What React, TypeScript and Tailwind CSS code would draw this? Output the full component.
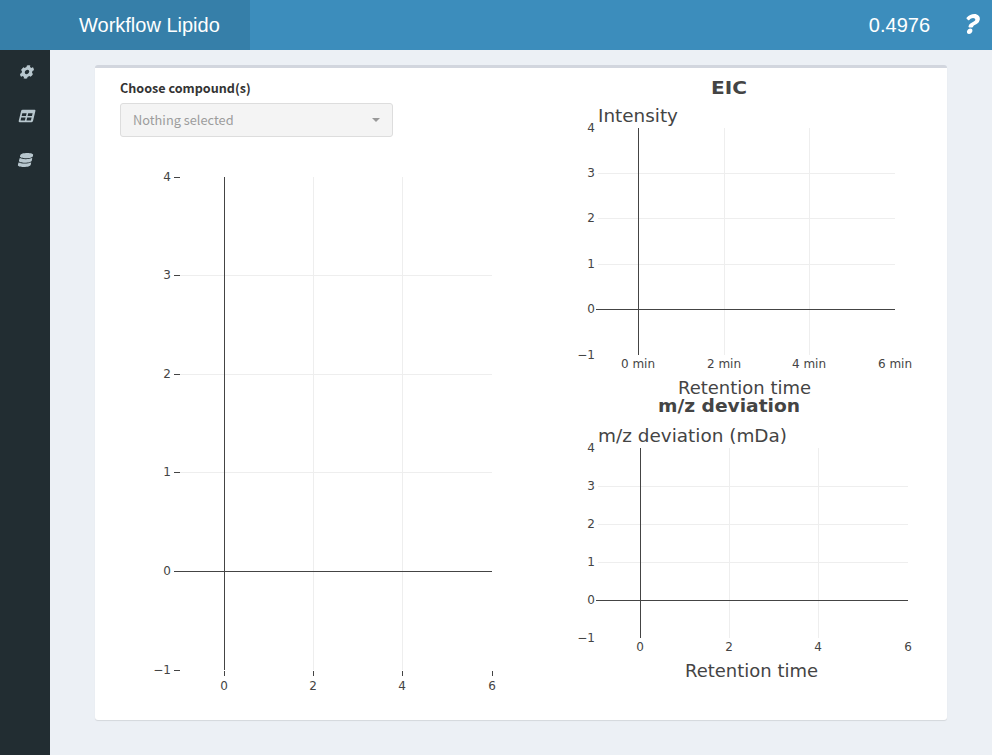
import { FaCog, FaDatabase, FaQuestion } from "react-icons/fa";

type Tick = { at: number; label: string };
type Label = { text: string; x: number; y: number; width: number; bold?: boolean };
type ChartProps = {
  width: number;
  height: number;
  left: number;
  right: number;
  top: number;
  bottom: number;
  xs: Tick[];
  ys: Tick[];
  xBase: number;
  labelRight: number;
  zeroStart: number;
  outerTicks?: boolean;
  labels?: Label[];
  className: string;
};

const GRID = "#eeeeee";
const INK = "#444444";

function Chart(p: ChartProps) {
  return (
    <svg
      width={p.width}
      height={p.height}
      className={`block overflow-visible font-['DejaVu_Sans',sans-serif] ${p.className}`}
      fill={INK}
      shapeRendering="crispEdges"
    >
      {p.xs.slice(1, 3).map((t) => (
        <rect key={t.at} x={t.at} y={p.top} width={1} height={p.bottom - p.top} fill={GRID} />
      ))}
      {p.ys.slice(1, 4).map((t) => (
        <rect key={t.at} x={p.left} y={t.at} width={p.right - p.left} height={1} fill={GRID} />
      ))}
      <rect x={p.xs[0].at} y={p.top} width={1} height={p.bottom - p.top} />
      <rect x={p.zeroStart} y={p.ys[4].at} width={p.right - p.zeroStart} height={1} />
      {p.outerTicks && p.xs.map((t) => <rect key={t.at} x={t.at} y={p.bottom + 1} width={1} height={5} />)}
      {p.outerTicks && p.ys.map((t) => <rect key={t.at} x={p.zeroStart} y={t.at} width={6} height={1} />)}
      {p.xs.map((t) => (
        <text key={t.at} x={t.at} y={p.xBase} textAnchor="middle" className="text-[12px]">
          {t.label}
        </text>
      ))}
      {p.ys.map((t) => (
        <text key={t.at} x={p.labelRight} y={t.at + 4} textAnchor="end" className="text-[12px]">
          {t.label}
        </text>
      ))}
      {p.labels?.map((l) => (
        <text
          key={l.text}
          x={l.x}
          y={l.y}
          textLength={l.width}
          lengthAdjust="spacingAndGlyphs"
          className={l.bold ? "text-[18px] font-bold" : "text-[18px]"}
        >
          {l.text}
        </text>
      ))}
    </svg>
  );
}

function TableIcon() {
  return (
    <svg width="18" height="14" viewBox="0 0 18 14" fill="currentColor" fillRule="evenodd" className="shrink-0">
      <path d="M4.6 .8H16.6Q17.7 .8 17.4 1.9L15 12.1Q14.7 13.2 13.6 13.2H1.5Q.4 13.2 .7 12.1L3.1 1.9Q3.4 .8 4.6 .8ZM4.3 4.2L3.7 6.9H8L8.6 4.2ZM10.2 4.2L9.6 6.9H14L14.6 4.2ZM3.2 8.6L2.6 11.5H6.9L7.6 8.6ZM9.2 8.6L8.5 11.5H12.9L13.6 8.6Z" />
    </svg>
  );
}

const ticks = (at: number[], labels: string[]): Tick[] => at.map((v, i) => ({ at: v, label: labels[i] }));
const Y = ["4", "3", "2", "1", "0", "−1"];

export default function App() {
  return (
    <div className="flex h-[755px] w-[992px] flex-col overflow-hidden bg-[#ecf0f5]">
      <header className="flex h-[50px] shrink-0 bg-[#3c8dbc] font-['Liberation_Sans',sans-serif] text-[20px] leading-[50px] text-white">
        <div className="w-[250px] bg-[#367fa9] pl-[79px]">Workflow Lipido</div>
        <div className="flex flex-1 items-center justify-end pr-[13px]">
          <span className="mr-[34px]">0.4976</span>
          <FaQuestion className="mb-[3px] h-[20px] w-[15px] -skew-x-[14deg]" preserveAspectRatio="none" />
        </div>
      </header>
      <div className="flex min-h-0 flex-1">
        <aside className="flex w-[50px] shrink-0 flex-col items-center gap-[30px] bg-[#222d32] pt-[15px] pl-[3px] text-[#b8c7ce]">
          <FaCog className="size-[14px] -skew-x-[14deg]" />
          <TableIcon />
          <FaDatabase className="mr-[2px] h-[14px] w-[13px] -skew-x-[14deg]" preserveAspectRatio="none" />
        </aside>
        <main className="flex-1 pt-[15px] pl-[45px]">
          <section className="flex h-[655px] w-[852px] rounded-[3px] border-t-[3px] border-[#d2d6de] bg-white shadow-[0_1px_1px_rgba(0,0,0,0.1)]">
            <div className="w-[445px] pt-[10px] pl-[25px] font-['Noto_Sans_CJK_SC',sans-serif]">
              <label className="block h-[25px] text-[12.6px] leading-[20px] font-bold whitespace-nowrap text-[#333]">
                Choose compound(s)
              </label>
              <button className="flex h-[34px] w-[273px] items-center justify-between rounded-[3px] border border-[#ddd] bg-[#f4f4f4] px-[12px] text-[12.8px] text-[#9c9c9c]">
                Nothing selected
                <span className="h-0 w-0 border-x-4 border-t-4 border-x-transparent border-t-[#999]" />
              </button>
              <Chart
                className="mt-[23px]"
                width={400}
                height={550}
                left={60}
                right={372}
                top={17}
                bottom={510}
                xs={ticks([104, 193, 282, 372], ["0", "2", "4", "6"])}
                ys={ticks([17, 115, 214, 312, 411, 510], Y)}
                xBase={530}
                labelRight={51}
                zeroStart={54}
                outerTicks
              />
            </div>
            <div className="flex flex-col pt-[2px]">
              <Chart
                className=""
                width={400}
                height={325}
                left={58}
                right={355}
                top={58}
                bottom={285}
                xs={ticks([98, 184, 269, 355], ["0 min", "2 min", "4 min", "6 min"])}
                ys={ticks([58, 103, 148, 194, 239, 285], Y)}
                xBase={298}
                labelRight={55}
                zeroStart={56}
                labels={[
                  { text: "EIC", x: 171, y: 24, width: 36, bold: true },
                  { text: "Intensity", x: 58, y: 52, width: 80 },
                  { text: "Retention time", x: 138, y: 324, width: 133 },
                ]}
              />
              <Chart
                className=""
                width={400}
                height={310}
                left={58}
                right={368}
                top={53}
                bottom={243}
                xs={ticks([100, 189, 278, 368], ["0", "2", "4", "6"])}
                ys={ticks([53, 91, 129, 167, 205, 243], Y)}
                xBase={256}
                labelRight={55}
                zeroStart={56}
                labels={[
                  { text: "m/z deviation", x: 118, y: 17, width: 142, bold: true },
                  { text: "m/z deviation (mDa)", x: 58, y: 47, width: 189 },
                  { text: "Retention time", x: 145, y: 282, width: 133 },
                ]}
              />
            </div>
          </section>
        </main>
      </div>
    </div>
  );
}
